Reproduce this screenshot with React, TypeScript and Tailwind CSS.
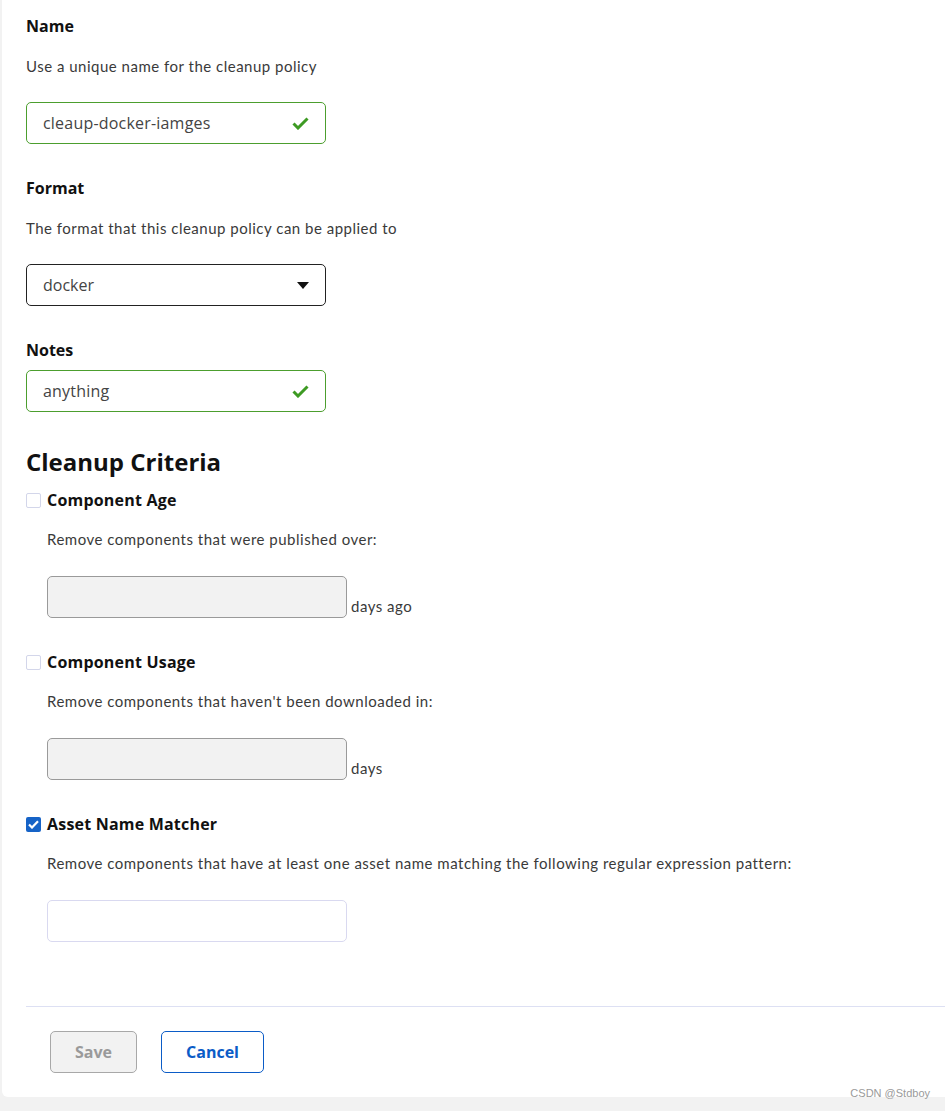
import React from 'react';

const label = "font-['Open_Sans',sans-serif] text-[16px] leading-[20px] font-bold text-[#111]";
const desc = "font-['Lato',sans-serif] text-[15px] tracking-[0.5px] leading-[20px] text-[#3a3a3a]";

const GreenCheck = () => (
  <svg width="17" height="13" viewBox="0 0 17 13" className="shrink-0">
    <path d="M1.5 6.5 L6 11 L15.5 1.5" fill="none" stroke="#3d9a23" strokeWidth="3" />
  </svg>
);

const ValidInput = ({ value }: { value: string }) => (
  <div className="w-[300px] h-[42px] border border-[#4c9e2e] rounded-[5px] flex items-center justify-between pl-4 pr-4">
    <span className="font-['Open_Sans',sans-serif] text-[16px] tracking-[0.2px] text-[#444]">{value}</span>
    <GreenCheck />
  </div>
);

const Checkbox = ({ checked }: { checked?: boolean }) =>
  checked ? (
    <div className="w-[15px] h-[15px] rounded-[2px] bg-[#1663c7] flex items-center justify-center shrink-0">
      <svg width="11" height="9" viewBox="0 0 11 9">
        <path d="M1 4.5 L4 7.5 L10 1.2" fill="none" stroke="#fff" strokeWidth="2.2" />
      </svg>
    </div>
  ) : (
    <div className="w-[15px] h-[15px] rounded-[2px] border border-[#d3d6ea] bg-white shrink-0" />
  );

interface CriterionProps {
  title: string;
  text: string;
  unit?: string;
  checked?: boolean;
}

const Criterion: React.FC<CriterionProps> = ({ title, text, unit, checked }) => (
  <div>
    <div className="flex items-center gap-[6px]">
      <Checkbox checked={checked} />
      <span className={`${label} tracking-[0.2px]`}>{title}</span>
    </div>
    <div className="pl-[21px]">
      <p className={`${desc} mt-[19px]`}>{text}</p>
      <div className="flex items-end gap-[4px] mt-[27px]">
        {checked ? (
          <div className="w-[300px] h-[42px] border border-[#d9d9f0] rounded-[5px] bg-white" />
        ) : (
          <div className="w-[300px] h-[42px] border border-[#9a9a9a] rounded-[5px] bg-[#f2f2f2]" />
        )}
        {unit && <span className={`${desc} leading-[16px] mb-[2px]`}>{unit}</span>}
      </div>
    </div>
  </div>
);

export default function App() {
  return (
    <div className="min-h-screen bg-[#f2f2f2]">
      <div className="ml-[2px] bg-white rounded-bl-[6px] relative pb-[24px]">
        <div className="pl-6 pt-4">
          {/* Name */}
          <h3 className={label}>Name</h3>
          <p className={`${desc} mt-5`}>Use a unique name for the cleanup policy</p>
          <div className="mt-[26px]">
            <ValidInput value="cleaup-docker-iamges" />
          </div>

          {/* Format */}
          <h3 className={`${label} mt-[34px]`}>Format</h3>
          <p className={`${desc} mt-5`}>The format that this cleanup policy can be applied to</p>
          <div className="mt-[26px] w-[300px] h-[42px] border border-[#222] rounded-[5px] flex items-center justify-between pl-4 pr-4">
            <span className="font-['Open_Sans',sans-serif] text-[16px] text-[#444]">docker</span>
            <svg width="12" height="7" viewBox="0 0 12 7">
              <path d="M0 0 H12 L6 7 Z" fill="#111" />
            </svg>
          </div>

          {/* Notes */}
          <h3 className={`${label} mt-[34px]`}>Notes</h3>
          <div className="mt-[10px]">
            <ValidInput value="anything" />
          </div>

          {/* Criteria */}
          <h2 className="mt-[34px] font-['Open_Sans',sans-serif] text-[24px] leading-[32px] font-bold text-[#111]">
            Cleanup Criteria
          </h2>
          <div className="mt-[12px] flex flex-col gap-[34px]">
            <Criterion title="Component Age" text="Remove components that were published over:" unit="days ago" />
            <Criterion title="Component Usage" text="Remove components that haven't been downloaded in:" unit="days" />
            <Criterion
              title="Asset Name Matcher"
              text="Remove components that have at least one asset name matching the following regular expression pattern:"
              checked
            />
          </div>

          {/* Footer */}
          <div className="mt-[64px] border-t border-[#dde0f3]" />
          <div className="flex gap-[24px] pl-6 mt-[24px]">
            <button className="w-[87px] h-[42px] rounded-[5px] border border-[#a8a8a8] bg-[#f2f2f2] font-['Open_Sans',sans-serif] text-[16px] font-bold text-[#9a9a9a]">
              Save
            </button>
            <button className="w-[103px] h-[42px] rounded-[5px] border border-[#0b5cc7] bg-white font-['Open_Sans',sans-serif] text-[16px] font-bold text-[#0b5cc7]">
              Cancel
            </button>
          </div>
        </div>
        <span className="absolute right-[15px] bottom-[-4px] font-['Liberation_Sans',sans-serif] text-[11px] text-[#9a9a9a]">
          CSDN @Stdboy
        </span>
      </div>
    </div>
  );
}
